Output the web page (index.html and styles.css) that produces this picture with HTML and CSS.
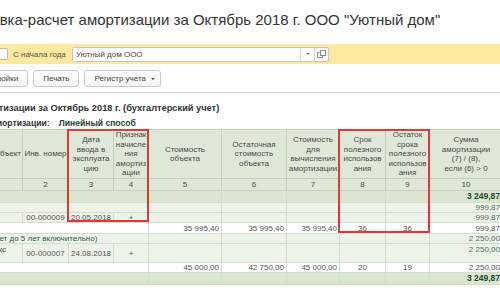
FILE: index.html
```html
<!DOCTYPE html>
<html lang="ru">
<head>
  <meta charset="UTF-8">
  <title>Справка-расчет амортизации</title>
  <link rel="stylesheet" href="styles.css">
</head>
<body>

  <h1 class="title">Справка-расчет амортизации за Октябрь 2018 г. ООО "Уютный дом"</h1>

  <div class="filter">
    <span class="check"></span>
    <span class="filter-label">С начала года</span>
    <div class="field">
      <span class="field-text">Уютный дом ООО</span>
      <span class="field-btn"><span class="arrow"></span></span>
      <span class="field-btn">
        <svg width="9" height="8" viewBox="0 0 9 8">
          <rect x="3.5" y="0.5" width="5" height="5" fill="none" stroke="#8a8a8a"/>
          <path d="M2.5 2.5 H0.5 V7.5 H5.5 V5.5" fill="none" stroke="#8a8a8a"/>
        </svg>
      </span>
    </div>
  </div>

  <div class="toolbar">
    <button class="btn">Настройки</button>
    <button class="btn">Печать</button>
    <button class="btn btn-menu">Регистр учета <span class="arrow dark"></span></button>
  </div>

  <div class="report">
    <div class="rep-title">Справка-расчет амортизации за Октябрь 2018 г. (бухгалтерский учет)</div>
    <div class="rep-method">
      <span>Способ начисления амортизации:</span>
      <span class="method">Линейный способ</span>
    </div>

    <div class="grid-wrap">
      <table class="grid">
        <colgroup>
          <col class="c1"><col class="c2"><col class="c3"><col class="c4"><col class="c5">
          <col class="c6"><col class="c7"><col class="c8"><col class="c9"><col class="c10">
        </colgroup>
        <thead>
          <tr class="head">
            <th class="obj-head">Объект</th>
            <th>Инв. номер</th>
            <th>Дата<br>ввода в<br>эксплуата<br>цию</th>
            <th>Признак<br>начисле<br>ния<br>амортиз<br>ации</th>
            <th>Стоимость<br>объекта</th>
            <th>Остаточная<br>стоимость<br>объекта</th>
            <th>Стоимость<br>для<br>вычисления<br>амортизации</th>
            <th>Срок<br>полезного<br>использов<br>ания</th>
            <th>Остаток<br>срока<br>полезного<br>использов<br>ания</th>
            <th>Сумма<br>амортизации<br>(7) / (8),<br>если (6) &gt; 0</th>
          </tr>
          <tr class="nums">
            <th>1</th><th>2</th><th>3</th><th>4</th><th>5</th>
            <th>6</th><th>7</th><th>8</th><th>9</th><th>10</th>
          </tr>
        </thead>
        <tbody>
          <tr class="total">
            <td colspan="4"></td><td></td><td></td><td></td><td></td><td></td>
            <td>3 249,87</td>
          </tr>
          <tr class="light">
            <td colspan="4"></td><td></td><td></td><td></td><td></td><td></td>
            <td>999,87</td>
          </tr>
          <tr class="light">
            <td></td><td class="mid">00-000009</td><td class="mid">20.05.2018</td><td class="mid">+</td>
            <td></td><td></td><td></td><td></td><td></td>
            <td>999,87</td>
          </tr>
          <tr class="detail first">
            <td colspan="4"></td>
            <td>35 995,40</td><td>35 995,40</td><td>35 995,40</td>
            <td class="mid">36</td><td class="mid">36</td>
            <td>999,87</td>
          </tr>
          <tr class="light">
            <td colspan="4" class="group">Третья амортизационная группа (свыше 3 лет до 5 лет включительно)</td>
            <td></td><td></td><td></td><td></td><td></td>
            <td>2 250,00</td>
          </tr>
          <tr class="light tall">
            <td class="name">Мебельный комплекс</td>
            <td class="mid">00-000007</td><td class="mid">24.08.2018</td><td class="mid">+</td>
            <td></td><td></td><td></td><td></td><td></td>
            <td class="top">2 250,00</td>
          </tr>
          <tr class="detail">
            <td colspan="4"></td>
            <td>45 000,00</td><td>42 750,00</td><td>45 000,00</td>
            <td class="mid">20</td><td class="mid">19</td>
            <td>2 250,00</td>
          </tr>
          <tr class="total">
            <td colspan="4"></td><td></td><td></td><td></td><td></td><td></td>
            <td>3 249,87</td>
          </tr>
        </tbody>
      </table>

      <div class="mark mark-date"></div>
      <div class="mark mark-term"></div>
    </div>
  </div>

</body>
</html>
```

FILE: styles.css
```css
* {
  margin: 0;
  padding: 0;
  box-sizing: border-box;
}

body {
  width: 500px;
  height: 300px;
  overflow: hidden;
  font-family: "Liberation Sans", Arial, sans-serif;
  background: #fff;
  color: #333;
}

.title {
  height: 44px;
  padding-top: 11px;
  margin-left: -36px;
  font-size: 15px;
  font-weight: normal;
  line-height: 18px;
  white-space: nowrap;
  color: #333;
}

/* yellow filter strip */
.filter {
  display: flex;
  align-items: center;
  height: 20px;
  background: #fce89e;
  font-size: 8px;
  color: #555;
}

.check {
  width: 12px;
  height: 12px;
  margin-left: -4px;
  background: #fff;
  border: 1px solid #b8b8b8;
  border-radius: 2px;
}

.filter-label {
  width: 59px;
  margin-left: 5px;
  white-space: nowrap;
}

.field {
  display: flex;
  width: 257px;
  height: 15px;
  background: #fff;
  border: 1px solid #c6c6c6;
  border-radius: 2px;
}

.field-text {
  flex: 1;
  padding-left: 3px;
  line-height: 13px;
  color: #444;
}

.field-btn {
  display: flex;
  align-items: center;
  justify-content: center;
  width: 14px;
  border-left: 1px solid #dadada;
}

.arrow {
  display: inline-block;
  width: 0;
  height: 0;
  border-left: 2px solid transparent;
  border-right: 2px solid transparent;
  border-top: 2px solid #777;
}

.arrow.dark {
  margin-left: 5px;
  border-top-color: #555;
}

/* toolbar */
.toolbar {
  display: flex;
  gap: 5px;
  margin-left: -31px;
  padding: 6px 0 5px;
  border-bottom: 1px solid #d8d8d8;
}

.btn {
  display: flex;
  align-items: center;
  height: 17px;
  padding: 0 9px;
  font-family: inherit;
  font-size: 8px;
  color: #444;
  background: linear-gradient(#fff, #f5f5f5);
  border: 1px solid #c8c8c8;
  border-radius: 3px;
}

.btn-menu {
  padding-right: 5px;
}

/* report */
.report {
  padding-top: 10px;
}

.rep-title,
.rep-method {
  font-weight: bold;
  line-height: 11px;
  white-space: nowrap;
  color: #333;
}

.rep-title {
  margin-left: -99px;
  font-size: 9.25px;
}

.rep-method {
  display: flex;
  margin-top: 4px;
  margin-left: -96px;
  font-size: 8.6px;
}

.method {
  margin-left: 9px;
  color: #24442e;
}

.grid-wrap {
  position: relative;
  overflow: hidden;
}

.grid {
  width: 540px;
  margin-left: -38px;
  border-collapse: collapse;
  table-layout: fixed;
}

.c1 { width: 60px; }
.c2 { width: 46px; }
.c3 { width: 45px; }
.c4 { width: 35px; }
.c5 { width: 73px; }
.c6 { width: 65px; }
.c7 { width: 53px; }
.c8 { width: 46px; }
.c9 { width: 44px; }
.c10 { width: 73px; }

.grid th {
  padding: 0 1px;
  font-size: 8px;
  font-weight: normal;
  line-height: 9.5px;
  color: #4a4a4a;
  text-align: center;
  vertical-align: middle;
  white-space: nowrap;
  overflow: hidden;
  background: #dfe8d6;
  border: 1px solid #c3d0bd;
}

.grid .head th {
  height: 49px;
}

.grid .obj-head {
  text-align: right;
  padding-right: 1px;
}

.grid .nums th {
  height: 12px;
  line-height: 10px;
}

.grid td {
  height: 10px;
  padding: 0 2px;
  font-size: 8px;
  line-height: 9px;
  text-align: right;
  white-space: nowrap;
  overflow: hidden;
  color: #555;
  border: 1px solid #d3ddce;
}

.grid .total td {
  height: 12px;
  font-size: 8.5px;
  font-weight: bold;
  color: #21492f;
  background: #dbe6d1;
}

.grid .light td {
  color: #4f705c;
  background: #eef3ea;
}

.grid .detail td {
  background: #fff;
}

.grid .detail.first td {
  height: 11px;
}

.grid .tall td {
  height: 19px;
}

.grid td.mid {
  text-align: center;
  color: #555;
}

.grid td.top {
  vertical-align: top;
  padding-top: 1px;
}

.grid td.group {
  text-align: left;
  text-indent: -129px;
  color: #2e5a4c;
}

.grid td.name {
  text-align: left;
  vertical-align: top;
  padding-top: 1px;
  text-indent: -39px;
  color: #444;
}

/* red highlight frames drawn over the table */
.mark {
  position: absolute;
  top: 0;
  border: 2px solid #e2363a;
  pointer-events: none;
}

.mark-date {
  left: 67px;
  width: 82px;
  height: 93px;
}

.mark-term {
  left: 338px;
  width: 92px;
  height: 104px;
}
```
